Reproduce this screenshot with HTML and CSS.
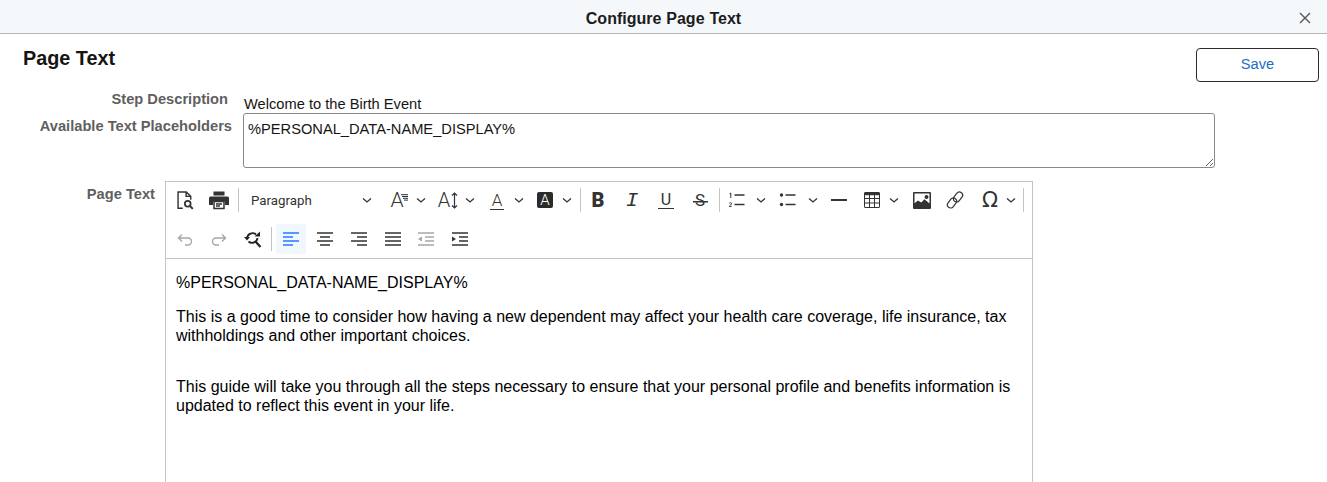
FILE: index.html
```html
<!DOCTYPE html>
<html lang="en">
<head>
<meta charset="utf-8">
<title>Configure Page Text</title>
<link rel="stylesheet" href="styles.css">
</head>
<body>
<header class="dialog-bar">
  <h1 class="dialog-title">Configure Page Text</h1>
  <button class="close" aria-label="Close"><svg width="12" height="12" viewBox="0 0 12 12"><path d="M1 1l10 10M11 1L1 11" stroke="#555" stroke-width="1.4" fill="none"/></svg></button>
</header>
<main class="page">
  <div class="title-row">
    <h2 class="page-title">Page Text</h2>
    <button class="save">Save</button>
  </div>
  <div class="row row-step">
    <div class="label label-step">Step Description</div>
    <div class="value">Welcome to the Birth Event</div>
  </div>
  <div class="row row-avail">
    <div class="label label-avail">Available Text Placeholders</div>
    <textarea class="placeholders" readonly>%PERSONAL_DATA-NAME_DISPLAY%</textarea>
  </div>
  <div class="row row-editor">
    <div class="label label-editor">Page Text</div>
    <div class="editor">
      <div class="toolbar">
        <div class="tb-row tb-row-1">
          <span class="btn"><svg width="22" height="22" viewBox="0 0 20 20" fill="none" stroke="#333" stroke-width="1.3"><path d="M8 17.500H3.700V2.700h7.500l4 4v3M11 2.700v4h4.200"/><circle cx="12.500" cy="13.500" r="2.600" stroke-width="1.600"/><path d="M14.500 15.500l2.600 2.600" stroke-width="1.800"/></svg></span>
          <span class="btn"><svg width="22" height="20" viewBox="0 0 22 20"><path fill="#333" d="M5.500 1.500h11v4h-11zM2.500 6.500h17a1.500 1.500 0 0 1 1.500 1.500v7h-4v-3.500H5V15H1V8a1.500 1.500 0 0 1 1.500-1.500z"/><path fill="none" stroke="#333" stroke-width="1.500" d="M6 11.500h10v7H6zM8 14h6M8 16h4"/></svg></span>
          <span class="sep"></span>
          <span class="para"><span class="para-name">Paragraph</span><svg class="chev" viewBox="0 0 10 10"><path d="M1 3.500l4 3.500 4-3.500"/></svg></span>
          <span class="dd"><span class="btn"><span class="glyph fam">A</span><svg class="fam-lines" width="7" height="7" viewBox="0 0 7 7"><path d="M0 .7h7M1 2.500h6M2 4.300h5M3 6.100h4" stroke="#333"/></svg></span><svg class="chev" viewBox="0 0 10 10"><path d="M1 3.500l4 3.500 4-3.500"/></svg></span>
          <span class="dd"><span class="btn"><span class="glyph size">A</span><svg width="7" height="17" viewBox="0 0 7 17"><path d="M3.500 1v15M1 3.500l2.500-2.500 2.500 2.500M1 13.500l2.500 2.500 2.500-2.500" stroke="#333" stroke-width="1.200" fill="none"/></svg></span><svg class="chev" viewBox="0 0 10 10"><path d="M1 3.500l4 3.500 4-3.500"/></svg></span>
          <span class="dd dd-color"><span class="btn"><span class="glyph color">A</span></span><svg class="chev" viewBox="0 0 10 10"><path d="M1 3.500l4 3.500 4-3.500"/></svg></span>
          <span class="dd dd-bg"><span class="btn"><span class="glyph bg">A</span></span><svg class="chev" viewBox="0 0 10 10"><path d="M1 3.500l4 3.500 4-3.500"/></svg></span>
          <span class="sep"></span>
          <span class="btn"><span class="glyph bold">B</span></span>
          <span class="btn"><span class="glyph ital">I</span></span>
          <span class="btn"><span class="glyph under">U</span></span>
          <span class="btn"><span class="glyph strike">S</span></span>
          <span class="sep sep-list"></span>
          <span class="dd dd-ol"><span class="btn"><svg width="20" height="20" viewBox="0 0 20 20" fill="none"><path d="M7.500 5h10M7.500 14.500h10" stroke="#333" stroke-width="1.500"/><path d="M2.500 3.800l1.300-.8v5" stroke="#333" stroke-width="1"/><path d="M2.300 13.300c.5-1 2.400-.8 2.200.4-.1.800-1.700 1.700-2.200 2.700h2.400" stroke="#333" stroke-width="1"/></svg></span><svg class="chev" viewBox="0 0 10 10"><path d="M1 3.500l4 3.500 4-3.500"/></svg></span>
          <span class="dd dd-ul"><span class="btn"><svg width="20" height="20" viewBox="0 0 20 20" fill="none"><circle cx="3.500" cy="5" r="1.700" fill="#333"/><circle cx="3.500" cy="14.500" r="1.700" fill="#333"/><path d="M7.500 5h10M7.500 14.500h10" stroke="#333" stroke-width="1.500"/></svg></span><svg class="chev" viewBox="0 0 10 10"><path d="M1 3.500l4 3.500 4-3.500"/></svg></span>
          <span class="btn btn-hr"><svg width="18" height="20" viewBox="0 0 18 20"><path d="M1 10h16" stroke="#333" stroke-width="2"/></svg></span>
          <span class="dd dd-table"><span class="btn"><svg width="18" height="18" viewBox="0 0 18 18" fill="none" stroke="#333"><rect x="1.500" y="1.500" width="15" height="15" rx=".5"/><path d="M1.500 3h15" stroke-width="2.400"/><path d="M1.500 7.500h15M1.500 12h15M6.500 3v13.500M11.500 3v13.500"/></svg></span><svg class="chev" viewBox="0 0 10 10"><path d="M1 3.500l4 3.500 4-3.500"/></svg></span>
          <span class="btn btn-img"><svg width="18" height="17" viewBox="0 0 18 17"><path fill="#333" fill-rule="evenodd" d="M1 0h16a1 1 0 0 1 1 1v15a1 1 0 0 1-1 1H1a1 1 0 0 1-1-1V1a1 1 0 0 1 1-1zm.5 1.500v9.800l3.500-2.800 3.200 2 3.300-3.300 5 4.300V1.500zM13.500 3a2 2 0 1 1 0 4 2 2 0 0 1 0-4z"/></svg></span>
          <span class="btn"><svg width="20" height="20" viewBox="0 0 20 20" fill="none" stroke="#333" stroke-width="1.200"><rect x="7.500" y="3.800" width="11" height="6.400" rx="3.200" transform="rotate(-52 13 7)"/><rect x="1.500" y="9.800" width="11" height="6.400" rx="3.200" transform="rotate(-52 7 13)"/></svg></span>
          <span class="dd dd-omega"><span class="btn"><span class="glyph omega">Ω</span></span><svg class="chev" viewBox="0 0 10 10"><path d="M1 3.500l4 3.500 4-3.500"/></svg></span>
          <span class="sep sep-end"></span>
        </div>
        <div class="tb-row tb-row-2">
          <span class="btn"><svg width="20" height="20" viewBox="0 0 20 20" fill="none" stroke="#a6a6a6" stroke-width="1.400"><path d="M7 5.500L3.500 9 7 12.500M3.500 9H13a3.500 3.500 0 0 1 3.500 3.500v0A3.500 3.500 0 0 1 13 16H10"/></svg></span>
          <span class="btn"><svg width="20" height="20" viewBox="0 0 20 20" fill="none" stroke="#a6a6a6" stroke-width="1.400"><path d="M13 5.500L16.500 9 13 12.500M16.500 9H7a3.500 3.500 0 0 0-3.500 3.500v0A3.500 3.500 0 0 0 7 16h3"/></svg></span>
          <span class="btn"><svg width="20" height="20" viewBox="0 0 20 20" fill="none" stroke="#222" stroke-width="1.900"><path d="M12.500 12.500l5 5.500" stroke-width="2.200"/><path d="M4 9a5.500 5.500 0 0 1 9-3.500"/><path d="M14.500 9a5.500 5.500 0 0 1-9 3.500"/><path d="M1 8h6l-3 3.500zM11.500 7.500h5.500V2.500z" fill="#222" stroke="none"/></svg></span>
          <span class="sep sep-r2"></span>
          <span class="btn btn-active"><svg width="20" height="20" viewBox="0 0 20 20"><path d="M2 4h16M2 8h10M2 12h16M2 16h10" stroke="#2977ff" stroke-width="1.500"/></svg></span>
          <span class="btn btn-a2"><svg width="20" height="20" viewBox="0 0 20 20"><path d="M2 4h16M5 8h10M2 12h16M5 16h10" stroke="#333" stroke-width="1.500"/></svg></span>
          <span class="btn"><svg width="20" height="20" viewBox="0 0 20 20"><path d="M2 4h16M8 8h10M2 12h16M8 16h10" stroke="#333" stroke-width="1.500"/></svg></span>
          <span class="btn"><svg width="20" height="20" viewBox="0 0 20 20"><path d="M2 4h16M2 8h16M2 12h16M2 16h16" stroke="#333" stroke-width="1.500"/></svg></span>
          <span class="btn btn-tight"><svg width="20" height="20" viewBox="0 0 20 20"><path d="M2 4h16M9 8h9M9 12h9M2 16h16" stroke="#a6a6a6" stroke-width="1.500"/><path d="M6 7.500v5L2 10z" fill="#a6a6a6"/></svg></span>
          <span class="btn"><svg width="20" height="20" viewBox="0 0 20 20"><path d="M2 4h16M9 8h9M9 12h9M2 16h16" stroke="#333" stroke-width="1.500"/><path d="M2 7.500v5L6 10z" fill="#333"/></svg></span>
        </div>
      </div>
      <div class="content">
        <p>%PERSONAL_DATA-NAME_DISPLAY%</p>
        <p>This is a good time to consider how having a new dependent may affect your health care coverage, life insurance, tax withholdings and other important choices.</p>
        <p class="after-gap">This guide will take you through all the steps necessary to ensure that your personal profile and benefits information is updated to reflect this event in your life.</p>
      </div>
    </div>
  </div>
</main>
</body>
</html>
```
FILE: styles.css
```css
* { box-sizing: border-box; }
html, body { margin: 0; height: 100%; overflow: hidden; background: #fff; }
body { font-family: "Liberation Sans", Arial, sans-serif; color: #000; }

.dialog-bar { height: 34px; padding-top: 4px; background: #f5f8fa; border-bottom: 1px solid #b5b5b5; display: flex; align-items: center; justify-content: center; position: relative; }
.dialog-title { margin: 0; font-size: 16px; font-weight: 700; color: #1c1c1c; word-spacing: .5px; }
.close { position: absolute; right: 15px; top: 11px; width: 14px; height: 14px; padding: 0; border: 0; background: none; display: flex; align-items: center; justify-content: center; }

.page { padding: 14px 8px 0 22px; }
.title-row { display: flex; justify-content: space-between; align-items: flex-start; height: 43px; }
.page-title { margin: 0 0 0 1px; font-size: 19.800px; line-height: 20px; font-weight: 700; color: #161513; }
.save { width: 123px; height: 34px; padding: 0 0 2px; background: #fff; border: 1px solid #2c2c2c; border-radius: 4px; color: #1b6ec2; font: 14.670px "Liberation Sans", Arial, sans-serif; }

.row { display: flex; align-items: flex-start; }
.label { font-size: 14.670px; font-weight: 700; color: #5f5f5f; text-align: right; line-height: 16px; flex: none; }
.row-step { height: 20px; }
.label-step { width: 206px; }
.value { margin-left: 16px; margin-top: 5px; font-size: 14.670px; line-height: 17px; color: #161513; }
.row-avail { height: 54px; margin-top: 2px; }
.label-avail { width: 210px; margin-top: 5px; }
.placeholders { margin-left: 11px; width: 972px; height: 55px; border: 1px solid #8a8886; border-radius: 3px; padding: 7px 4px; font: 14.670px/17px "Liberation Sans", Arial, sans-serif; color: #161513; resize: vertical; outline: none; display: block; }
.row-editor { margin-top: 14px; }
.label-editor { width: 133px; margin-top: 5px; }

.editor { margin-left: 10px; width: 868px; height: 400px; border: 1px solid #c4c4c4; flex: none; }
.toolbar { height: 77px; border-bottom: 1px solid #c4c4c4; padding: 0 0 0 2px; }
.tb-row { display: flex; align-items: center; }
.tb-row-1 { height: 36px; }
.tb-row-2 { height: 38px; margin-top: 2px; }
.btn { width: 34px; height: 30px; display: flex; align-items: center; justify-content: center; flex: none; }
.btn-active { width: 30px; background: #f0f7ff; border-radius: 2px; }
.btn-a2 { margin-left: 2px; }
.btn-tight { margin-left: -1px; }
.sep { width: 1px; height: 24px; background: #c4c4c4; flex: none; margin: 0 0 0 2px; }
.sep-list { margin-left: 2px; }
.sep-end { margin-left: 5px; }
.sep-r2 { margin: 0 4px 0 1px; }
.para { width: 143px; padding: 0 10px 0 12px; display: flex; align-items: center; justify-content: space-between; flex: none; }
.para-name { font: 13.300px Roboto, sans-serif; color: #333; }
.chev { width: 10px; height: 10px; fill: none; stroke: #333; stroke-width: 1.300; flex: none; }
.dd { display: flex; align-items: center; flex: none; width: 49px; }
.dd-color { width: 48px; }
.dd-bg { width: 50px; }
.dd-ol { width: 50px; }
.dd-ol .chev { margin-left: 2px; }
.dd-ul { width: 52px; margin-left: 1px; }
.dd-ul .chev { margin-left: 3px; }
.dd-table { width: 51px; }
.dd-omega { width: 45px; margin-left: 1px; }
.dd-omega .chev { margin-left: -1px; }
.btn-hr, .btn-img { width: 32px; }

.glyph { color: #333; font-family: Roboto, "Liberation Sans", sans-serif; font-weight: 300; line-height: 1; display: block; }
.fam { font-size: 21px; }
.fam-lines { margin: -6px 0 0 -3px; }
.size { font-size: 20px; margin-right: 1px; }
.color { font-size: 17px; border-bottom: 1.500px solid #333; padding: 0 1.500px; line-height: 18px; }
.bg { font-size: 15px; color: #fff; background: #2b2b2b; width: 16px; height: 16px; line-height: 16px; text-align: center; border-radius: 2px; }
.bold { font-size: 20px; font-weight: 900; }
.ital { font-family: "Liberation Mono", monospace; font-style: italic; font-weight: 400; font-size: 21px; }
.under { font-size: 16px; font-weight: 400; border-bottom: 1.500px solid #333; line-height: 17px; padding: 0 3px; }
.strike { font-size: 17px; font-weight: 400; width: 15px; text-align: center; background: linear-gradient(#333, #333) center 9px / 100% 1.500px no-repeat; }
.omega { font-size: 21px; font-family: "DejaVu Sans", sans-serif; font-weight: 400; }

.content { padding: 14px 10px 0; font-size: 16px; line-height: 19px; color: #000; }
.content p { margin: 0 0 15px; }
.content .after-gap { margin-top: 32px; }
```
